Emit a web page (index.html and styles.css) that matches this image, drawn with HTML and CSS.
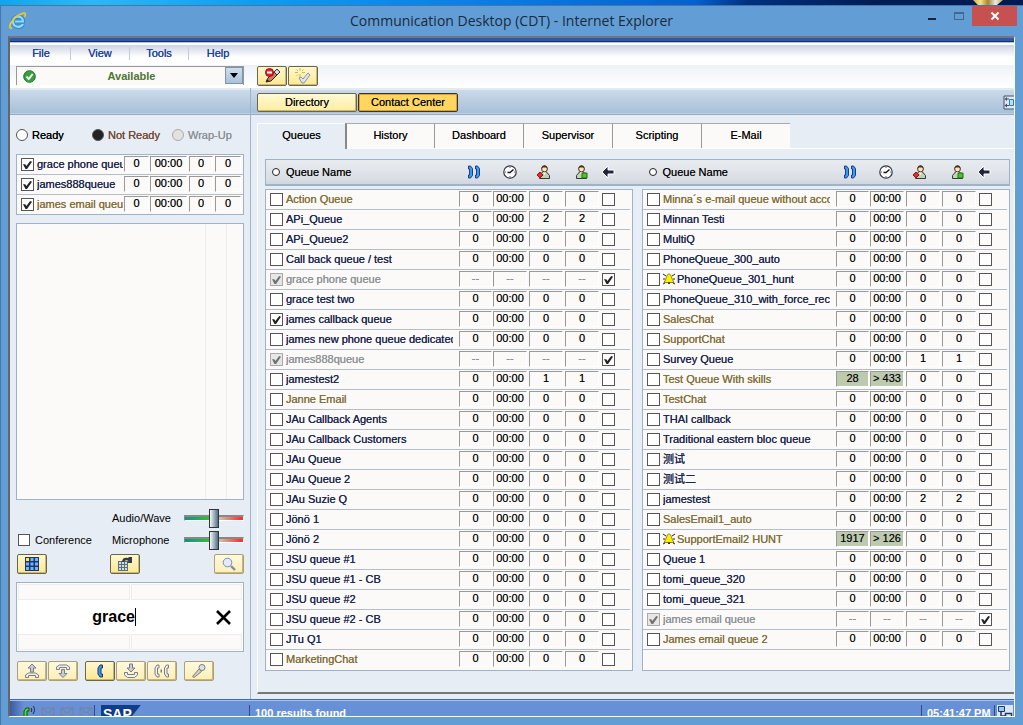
FILE: index.html
```html
<!doctype html>
<html lang="en">

<head>
    <meta charset="utf-8">
    <title>Communication Desktop (CDT)</title>
    <link rel="stylesheet" href="styles.css">
</head>

<body>
<!--Shared icon shapes-->
<svg class="sprite" aria-hidden="true">
    <symbol id="calls" viewBox="0 0 14 14">
        <path d="M1.500 1h2l2 2.500v7l-2 2.500h-2v-3h1v-6h-1zM8.500 1h2l2 2.500v7l-2 2.500h-2v-3h1v-6h-1z" fill="#2f9cff" stroke="#1b2c66" stroke-width=".9"/>
    </symbol>
    <symbol id="clock" viewBox="0 0 14 14">
        <circle cx="7" cy="7" r="6.200" fill="#fff" stroke="#334" stroke-width="1.200"/>
        <path d="M10.500 4.500L7 7.500H4.500" fill="none" stroke="#112" stroke-width="1.400"/>
        <path d="M7 2v1M7 11v1M2 7h1M11 7h1" stroke="#556"/>
    </symbol>
    <symbol id="person" viewBox="0 0 14 14">
        <path d="M2.500 13.500v-3l3-3.500h4l3 3.500v3z" fill="#c3d2b4" stroke="#333a35"/>
        <path d="M6 7l1.500 3L9 7" fill="#fff"/>
        <circle cx="7.500" cy="4" r="2.900" fill="#ffe2b8" stroke="#4a3520"/>
        <path d="M4.500 3.500c0-4.500 6-4.500 6 0L9 2.500H6z" fill="#4a3520"/>
    </symbol>
    <symbol id="arrow" viewBox="0 0 14 14">
        <path d="M1 7l6-6v4h6v4H7v4z" fill="#24243f" stroke="#fff"/>
    </symbol>
    <symbol id="bell" viewBox="0 0 12 12">
        <path d="M0 1l3 2M12 1L9 3M0 6h2M12 6h-2M0 11l2-1M12 11l-2-1" stroke="#222" fill="none"/>
        <path d="M6 1c-2.500 0-2 4-5 8.500h10C8 5 8.500 1 6 1z" fill="#fff000" stroke="#6d6200" stroke-width=".8"/>
        <path d="M5 9.500h2V11H5z" fill="#333"/>
    </symbol>
    <symbol id="mail" viewBox="0 0 14 12">
        <path d="M1 2h12v9H1zM1 2l6 5 6-5M1 11l5-5M13 11L8 6" fill="none" stroke="#77809a"/>
    </symbol>
</svg>

<div class="desktop"><span class="deskicon"></span></div>
<div class="window">
    <!--Title bar-->
    <header class="titlebar">
        <svg class="ie" viewBox="0 0 18 18">
            <path d="M14 12c-2 4-10 4-10-2.500C4 3 14 3 14 9.500H6" fill="none" stroke="#2f86c9" stroke-width="4"/>
            <path d="M14 12c-2 4-10 4-10-2.500C4 3 14 3 14 9.500H6" fill="none" stroke="#8fdcff" stroke-width="2.200"/>
            <path d="M3 16C-3 17 4 5 12 2c5-2 5 0 3.500 3" fill="none" stroke="#f6c81c" stroke-width="1.700"/>
        </svg>
        <h1>Communication Desktop (CDT) - Internet Explorer</h1>
        <div class="winbuttons">
            <button class="min" aria-label="Minimize"><span></span></button>
            <button class="max" aria-label="Maximize"><span></span></button>
            <button class="close" aria-label="Close"><svg width="10" height="10" viewBox="0 0 10 10"><path d="M1.500 1.500l7 7M8.500 1.500l-7 7" stroke="#fff" stroke-width="2"/></svg></button>
        </div>
    </header>

    <div class="frame">
        <div class="stripe"></div>
        <nav class="menu">
            <a href="#">File</a><a href="#">View</a><a href="#">Tools</a><a href="#">Help</a>
        </nav>
        <div class="toolbar">
            <div class="status">
                <svg class="ok" width="13" height="13" viewBox="0 0 13 13"><circle cx="6.500" cy="6.500" r="5.800" fill="#37a043" stroke="#256e2d"/><path d="M3.500 6.500l2.200 2.500 4-5" fill="none" stroke="#fff" stroke-width="1.800"/></svg>
                <select aria-label="Status"><option>Available</option></select>
                <span class="drop"></span>
            </div>
            <button class="btn" aria-label="Edit profile">
                <svg width="17" height="16" viewBox="0 0 17 16"><path d="M2 14l2-4 7-7 3 3-7 7z" fill="#c97f5b" stroke="#3a2018"/><path d="M10 4l3-3 3 3-3 3z" fill="#d8d8e4" stroke="#334"/><path d="M2 14l1-3 2 2z" fill="#222"/><circle cx="5.500" cy="4.500" r="4" fill="#e8202a" stroke="#8d1016"/><path d="M3 4.500h5" stroke="#fff" stroke-width="2"/></svg>
            </button>
            <button class="btn" aria-label="Apply">
                <svg width="17" height="16" viewBox="0 0 17 16"><path d="M5 0v3M5 6v3M0 4.500h3M7 4.500h3M1.500 1.500l1.500 1.500M8.500 1.500L7 3M1.500 8L3 6.500" stroke="#cdbd3b"/><path d="M4 10l2-1 2 2 5-6 2 2-6 8H7z" fill="#dde4ee" stroke="#8a93a3"/></svg>
            </button>
        </div>

        <div class="main">
            <aside class="left">
                <div class="band"></div>
                <div class="leftbody">
                    <div class="radios">
                        <label><input type="radio" name="state">Ready</label>
                        <label class="notready"><input type="radio" name="state" checked>Not Ready</label>
                        <label class="wrapup"><input type="radio" name="state" disabled>Wrap-Up</label>
                    </div>
                    <table class="queues mine" id="mine"></table>
                    <div class="calllist"></div>
                    <div class="audio">
                        <label for="wave">Audio/Wave</label>
                        <input type="range" id="wave">
                        <label class="conf"><input type="checkbox">Conference</label>
                        <label for="mic">Microphone</label>
                        <input type="range" id="mic">
                    </div>
                    <div class="buttons pads">
                        <button class="btn" aria-label="Keypad">
                            <svg width="14" height="14" viewBox="0 0 14 14"><path d="M0 0h14v14H0z" fill="#20336b"/><path d="M1 1h3v3H1z" fill="#ffe94a"/><path d="M5.500 1h3v3h-3zM10 1h3v3h-3zM1 5.500h3v3H1zM5.500 5.500h3v3h-3zM10 5.500h3v3h-3zM1 10h3v3H1zM5.500 10h3v3h-3zM10 10h3v3h-3z" fill="#6db7ff"/></svg>
                        </button>
                        <button class="btn" aria-label="Transfer keypad">
                            <svg width="14" height="14" viewBox="0 0 14 14"><path d="M0 4h10v10H0z" fill="#5d6f78"/><path d="M1 5h2v2H1zM4 5h2v2H4zM7 5h2v2H7zM1 8h2v2H1zM4 8h2v2H4zM7 8h2v2H7zM1 11h2v2H1zM4 11h2v2H4zM7 11h2v2H7z" fill="#cddde3"/><path d="M4 5c0-4 3-5 6-4l1-1h3v6H9l1.500-2C9 3 7 3 6 5z" fill="#343c48"/></svg>
                        </button>
                        <button class="btn dim" aria-label="Search">
                            <svg width="14" height="14" viewBox="0 0 14 14"><circle cx="5.500" cy="5.500" r="4.300" fill="#e2ebff" stroke="#7d8dab"/><path d="M9 9l4 4" stroke="#7d8dab" stroke-width="2.400"/></svg>
                        </button>
                    </div>
                    <div class="search">
                        <div class="slots"><span></span><span></span></div>
                        <div class="entry">
                            <input type="text" value="grace" aria-label="Number or name"><span class="caret"></span>
                            <button aria-label="Clear"><svg width="15" height="15" viewBox="0 0 15 15"><path d="M1 1l13 13M14 1L1 14" stroke="#000" stroke-width="2.600"/></svg></button>
                        </div>
                        <div class="slots"><span></span><span></span></div>
                    </div>
                    <div class="buttons">
                        <button class="btn dim" aria-label="Pick up"><svg width="16" height="16" viewBox="0 0 16 16"><path d="M8 1l4 4h-2.500v4h-3V5H4z" fill="#c9ccd6" stroke="#777d8b"/><path d="M1.500 14.500v-2.500l3-2h7l3 2v2.500h-3v-2h-7v2z" fill="#f3f1e8" stroke="#777d8b"/></svg></button>
                        <button class="btn dim" aria-label="Hang up"><svg width="16" height="16" viewBox="0 0 16 16"><path d="M8 14.500l-4-4h2.500v-4h3v4H12z" fill="#c9ccd6" stroke="#777d8b"/><path d="M1.500 6.500V4l3-2h7l3 2v2.500h-3v-2h-7v2z" fill="#f3f1e8" stroke="#777d8b"/></svg></button>
                        <button class="btn space" aria-label="Call"><svg width="16" height="16" viewBox="0 0 16 16"><path d="M10.500 2H8L6 5v6l2 3h2.500v-3H9V5h1.500z" fill="#3c9af5" stroke="#183568"/></svg></button>
                        <button class="btn dim" aria-label="Hold"><svg width="16" height="16" viewBox="0 0 16 16"><path d="M6.500 1h3v4H12L8 9 4 5h2.500z" fill="#c9ccd6" stroke="#777d8b"/><path d="M1.500 9.500h3v2h7v-2h3V12l-3 2.500h-7l-3-2.500z" fill="#f3f1e8" stroke="#777d8b"/></svg></button>
                        <button class="btn dim" aria-label="Conference call"><svg width="16" height="16" viewBox="0 0 16 16"><path d="M5 2H3L1 5v6l2 3h2v-3H3.500V5H5zM14.500 2h-2l-2 3v6l2 3h2v-3H13V5h1.500z" fill="#f3f1e8" stroke="#777d8b"/><path d="M6.500 6.500h1.500v3H6.500z" fill="#777d8b"/></svg></button>
                        <button class="btn dim space" aria-label="Record"><svg width="16" height="16" viewBox="0 0 16 16"><path d="M3 14.500l-1.500-1L8 6l2.500 2.500z" fill="#d8d2b4" stroke="#777d8b"/><circle cx="11" cy="4.500" r="3" fill="#dfe2ea" stroke="#777d8b"/></svg></button>
                    </div>
                </div>
            </aside>

            <section class="right">
                <div class="band">
                    <button class="tabbtn">Directory</button>
                    <button class="tabbtn on">Contact Center</button>
                    <button class="dock" aria-label="Dock"><svg width="11" height="15" viewBox="0 0 11 15"><path d="M11 1H1v13h10" fill="#dfe8f2" stroke="#40506e"/><path d="M1.500 4l2.500-2v4zM1.500 10.500l2.500-2v4z" fill="#40506e"/><path d="M3 4h3M3 10.500h3" stroke="#40506e"/><path d="M6.500 4.500h4v6h-4z" fill="#b6e4f7" stroke="#2d7fa8"/></svg></button>
                </div>
                <div class="tabs">
                    <button class="current">Queues</button>
                    <button>History</button>
                    <button>Dashboard</button>
                    <button>Supervisor</button>
                    <button>Scripting</button>
                    <button>E-Mail</button>
                </div>
                <div class="panel">
                    <div class="heads" id="heads"></div>
                    <div class="lists">
                        <div class="list"><table class="queues" id="listA"></table></div>
                        <div class="list"><table class="queues" id="listB"></table></div>
                    </div>
                </div>
            </section>
        </div>

        <!--Status bar-->
        <footer class="statusbar">
            <div class="tray">
                <svg width="14" height="14" viewBox="0 0 14 14"><path d="M7 2H4L2 5v6l2 3h1V5h2z" fill="#55dd22" stroke="#134d13"/><path d="M9 2c1 1 1 3 0 4M11 0c2 2 2 5 0 8" stroke="#223" fill="none"/></svg>
                <svg width="14" height="12"><use href="#mail"/></svg>
                <svg width="14" height="12"><use href="#mail"/></svg>
                <svg width="14" height="12"><use href="#mail"/></svg>
            </div>
            <div class="brand"><span>SAP</span></div>
            <div class="found">100 results found</div>
            <div class="time">05:41:47 PM</div>
            <div class="net"><svg width="16" height="14" viewBox="0 0 16 14"><path d="M0 0h16v14H0z" fill="#dce6f5"/><path d="M1.500 1.500h6v5h-6z" fill="#8fd0ee" stroke="#22365e"/><path d="M8.500 8.500h6v5h-6zM4 7v4h4" fill="none" stroke="#22365e" stroke-width="1.500"/></svg></div>
        </footer>
    </div>
</div>
<script src="script.js"></script>
</body>

</html>
```
FILE: styles.css
```css
*{box-sizing:border-box;}
body{margin:0; height:100vh; overflow:hidden; display:flex; flex-direction:column; font:11px/14px "Liberation Sans", "Noto Sans CJK SC", sans-serif; color:#000; background:#629ed5;}
button,input,select{font:inherit; color:inherit; margin:0;}
button{padding:0;}
svg{display:block; flex:none;}
.sprite{position:absolute; width:0; height:0;}
/*Desktop strip and window frame*/
.desktop{height:5px; flex:none; display:flex; justify-content:flex-end; padding-right:20px; background:linear-gradient(100deg,#10a5ec 0,#2cb8f5 9%,#0d9df0 25%,#0a80e8 45%,#0560d0 68%,#02307f 73%,#001d56 85%,#001a50);}
.deskicon{width:30px; height:5px; background:linear-gradient(90deg,#d9b43a,#f5e08a,#a9852a,#e8e8e8,#c9a63a); clip-path:polygon(0 0,100% 0,80% 100%,16% 100%);}
.window{flex:1; min-height:0; display:flex; flex-direction:column; padding:0 8px 8px 7px; border-top:1px solid #4577a8; border-left:1px solid #4577a8; background:#629ed5;}
.titlebar{height:30px; flex:none; position:relative; display:flex; align-items:center;}
.ie{width:18px; height:18px; margin-left:1px;}
.titlebar h1{flex:1; margin:0; padding-right:19px; text-align:center; font:14px/20px "Open Sans", sans-serif; color:#1b2a3a;}
.winbuttons{position:absolute; right:-2px; top:0; display:flex;}
.winbuttons button{width:27px; height:20px; border:0; background:none; display:flex; align-items:center; justify-content:center;}
.min span{width:8px; height:2px; margin-top:6px; background:#1d2630;}
.max span{width:10px; height:8px; border:1px solid #44688c; border-top-width:2px;}
.winbuttons .close{width:45px; background:#c75050;}
.frame{flex:1; min-height:0; display:flex; flex-direction:column; border:solid; border-width:2px 1px 1px 2px; border-color:#6f7782 #fff #fff #666; background:#e6edf4;}
.stripe{height:7px; flex:none; background:linear-gradient(#2f58a6 0 3px,#152f72 3px 4px,#b9c3d6 4px 5px,#fff 5px);}
/*Menu and toolbar*/
.menu{height:20px; flex:none; display:flex; align-items:flex-start; padding:2px 0 0 1px; background:linear-gradient(#cdd3e2,#fff 12px);}
.menu a{width:59px; line-height:13px; text-align:center; color:#1d439b; text-decoration:none; border-left:1px solid #c3cad8; text-shadow:0 0 0 currentColor;}
.menu a:first-child{border-color:transparent;}
.toolbar{height:23px; flex:none; display:flex; align-items:flex-start; padding:1px 6px; gap:1px; background:linear-gradient(#eef2f8,#fff);}
.status{position:relative; width:228px; margin-right:12px;}
.status select{display:block; appearance:none; width:100%; height:19px; padding:0 18px 0 21px; border:1px solid #999; border-bottom:0; border-radius:0; background:#fbfaf8; font-weight:bold; color:#4d7431; text-align:center; text-align-last:center;}
.ok{position:absolute; left:7px; top:4px;}
.drop{position:absolute; right:1px; top:1px; width:18px; height:17px; border:1px solid #7f92ac; background:linear-gradient(#cfdeee,#a9c1da); pointer-events:none;}
.drop::after{content:""; position:absolute; left:4px; top:5px; border:4px solid transparent; border-top:5px solid #000; border-bottom:0;}
.btn{width:30px; height:20px; flex:none; display:flex; align-items:center; justify-content:center; border:1px solid #6d6548; border-radius:2px; background:linear-gradient(#fff8d0,#fde991); box-shadow:inset -1px -1px #c9b672;}
.dim{border-color:#aaa07c; background:linear-gradient(#fff9de,#fcefb6);}
.main{flex:1; min-height:0; display:flex;}
.left{width:241px; flex:none; display:flex; flex-direction:column; border-right:1px solid #9fb3c8;}
.band{height:27px; flex:none; display:flex; align-items:center; gap:1px; border-top:2px solid #e2eaf2; border-bottom:1px solid #93aac2; background:linear-gradient(#cadaea,#a6bfd8); box-shadow:inset 0 -1px #c0d0e0;}
/*Left side*/
.leftbody{flex:1; min-height:0; display:flex; flex-direction:column; padding:13px 6px 18px;}
.radios{display:grid; grid-template-columns:76px 80px auto; margin-bottom:12px; text-shadow:0 0 0 currentColor;}
.radios label{display:flex; align-items:center; gap:4px;}
.radios input{appearance:none; width:12px; height:12px; border:1px solid #555; border-radius:50%; background:#fff;}
.radios input:checked{background:#222;}
.notready{color:#74483a;}
.wrapup{color:#8d9296;}
.radios input:disabled{border-color:#aaa; background:#e2e2e2;}
input[type=checkbox]{appearance:none; display:block; position:relative; width:13px; height:13px; border:1px solid #555; background:#fff;}
input[type=checkbox]:checked::before{content:""; position:absolute; left:1px; top:2px; width:9px; height:8px; background:#222; clip-path:polygon(0 40%,25% 40%,38% 62%,80% 0,100% 10%,45% 100%,28% 100%);}
input[type=checkbox]:disabled{border-color:#aaa; background:#e6e6e6;}
input[type=checkbox]:disabled::before{opacity:.6;}
.calllist{flex:1; min-height:0; margin:8px 0; border:1px solid #9fb3c8; background:linear-gradient(90deg,#fbfaf8 0 188px,#eeedec 188px 189px,#fbfaf8 189px 209px,#eeedec 209px 210px,#fbfaf8 210px);}
.audio{display:grid; grid-template-columns:96px 72px 60px; row-gap:3px; align-items:center;}
.audio > label[for=wave]{grid-column:2;}
.conf{display:flex; align-items:center; gap:5px; padding-left:2px;}
.conf input[type=checkbox]{width:12px; height:12px;}
input[type=range]{appearance:none; display:block; width:60px; height:19px; background:none;}
input[type=range]::-webkit-slider-runnable-track{height:6px; border:1px solid; border-color:#888 #fff #fff #888; border-top-width:2px; background:linear-gradient(90deg,#11908a,#2bc233 40%,#c8c2ae 60%,#f33 95%);}
input[type=range]::-webkit-slider-thumb{appearance:none; width:10px; height:19px; margin-top:-8px; border:1px solid #333; background:linear-gradient(90deg,#f5f8fa,#4f6f87);}
.buttons{display:flex; gap:1px; padding-left:1px;}
.buttons .space{margin-left:6px;}
.pads{gap:63px; margin:5px 0 8px;}
.pads .dim{margin-left:auto;}
.search{height:70px; flex:none; display:flex; flex-direction:column; margin-bottom:9px; padding:1px; border:1px solid #9fb3c8; background:#fdfdfc;}
.slots{height:16px; display:flex; gap:1px;}
.slots span{flex:1; border:1px solid #eeedec; background:#fbfaf8;}
.entry{flex:1; display:flex; align-items:center; background:#fff;}
.entry input{width:117px; padding:0; border:0; background:none; font-size:16px; font-weight:bold; text-align:right; outline:0;}
.caret{width:1px; height:18px; background:#000;}
.entry button{margin-left:auto; margin-right:11px; border:0; background:none;}
/*Queue tables*/
.queues{width:100%; border-collapse:separate; border-spacing:0; table-layout:fixed; background:#fbfaf8;}
.queues td{height:20px; padding:0; border-bottom:1px solid #b3bec8;}
.queues .pick{width:20px; padding-left:4px;}
.queues .name{padding-right:6px; padding-bottom:2px;}
.name div{display:flex; align-items:center; gap:2px; overflow:hidden; height:14px; white-space:nowrap; color:#1c2850; text-shadow:0 0 0 currentColor;}
.mailq .name div{color:#84703a;}
.off .name div,.off .num{color:#8d9296;}
.queues .num{width:36px; padding:1px 2px 0 0; text-align:center; vertical-align:top;}
.queues .num.first{width:34px; padding-right:1px;}
.num div{height:16px; line-height:13px; border:1px solid; border-color:#999 #fff #fff #999; text-shadow:0 0 0 #777;}
.hot div{background:#bccaae;}
.queues .take{width:29px; padding-left:1px;}
.mine{border:1px solid #9fb3c8;}
.mine tr:last-child td{border-bottom:0; height:19px;}
.queues.mine .name{padding-right:1px;}
.queues.mine .num{width:26px;}
.queues.mine .num.wait{width:39px;}
.queues.mine .num:last-child{width:28px;}
/*Right side*/
.right{flex:1; min-width:0; display:flex; flex-direction:column;}
.right .band{padding-left:6px;}
.tabbtn{width:100px; height:19px; border:1px solid #6d6548; border-radius:2px; background:linear-gradient(#fff9d5,#feeda0); box-shadow:inset -1px -1px #c9b672; text-shadow:0 0 0 #555;}
.tabbtn.on{background:#ffd65e; border-color:#3b3524; box-shadow:inset 0 0 0 1px #d9a03a;}
.dock{margin-left:auto; border:0; background:none;}
.tabs{display:flex; flex:none; margin:8px 0 0 6px; position:relative;}
.tabs button{width:89px; height:25px; padding-bottom:3px; border:0; border-top:1px solid #aaa; border-left:1px solid #999; background:#fbfaf8; text-shadow:0 0 0 #555;}
.tabs .current{width:88px; border-top-color:#fff; border-left-color:#fff; background:#e6edf4;}
.tabs .current + button{border-left:2px solid #888; height:26px; padding-bottom:4px;}
.panel{flex:1; min-height:0; display:flex; flex-direction:column; margin:-1px 0 5px 6px; padding:11px 4px 21px 7px; border-left:1px solid #fff; border-bottom:2px solid #777; background:linear-gradient(90deg,transparent 88px,#fff 88px) 0 0/100% 1px no-repeat;}
.heads{display:flex; height:27px; flex:none; gap:11px; padding-right:1px; border:1px solid #9fb3c8; border-bottom-width:2px; background:linear-gradient(#e9ecef,#dadee5 80%,#cfd5de);}
.head{flex:1; display:grid; grid-template-columns:20px 1fr 36px 34px 37px 27px 33px; align-items:center; text-shadow:0 0 0 #555;}
.head svg{width:14px; height:14px; margin-left:2px; overflow:visible;}
.head i{width:8px; height:8px; margin-left:6px; border:1px solid #222; border-radius:50%; background:#fff;}
.lists{flex:1; min-height:0; display:flex; gap:9px; margin-top:3px;}
.list{flex:1; min-width:0; padding-right:2px; border:1px solid #9fb3c8; background:#fbfaf8;}
#listA tr:last-child td{border-bottom-color:transparent;}
/*Status bar*/
.statusbar{height:17px; flex:none; overflow:hidden; display:flex; align-items:flex-start; padding-right:1px; border-top:1px solid #3f67b4; box-shadow:inset 0 1px #a9c2f0; background:linear-gradient(90deg,#3d5aa0,#6890d6 14px); color:#fff; font-weight:bold;}
.statusbar > div{height:22px; margin-top:5px; border-left:1px solid #2c4a8c; padding-left:5px; display:flex; align-items:flex-start;}
.statusbar .tray{border:0; width:84px; padding-left:12px; padding-top:1px; gap:5px;}
.statusbar .brand{width:155px;}
.brand span{padding:0 9px 0 2px; height:20px; background:#103c8c; clip-path:polygon(0 0,100% 0,60% 100%,0 100%); font-size:14px; line-height:18px; margin-left:1px;}
.found{flex:1; line-height:16px;}
.time{width:73px; line-height:16px;}
.statusbar .net{padding-left:2px;}
```
FILE: script.js
```js
//name, calls, wait, signed out, signed in, type (m = mail/chat, x = own queue, c = checked, h = hunt)
const mine = [
    ["grace phone queue", "0", "00:00", "0", "0", "c"],
    ["james888queue", "0", "00:00", "0", "0", "c"],
    ["james email queue", "0", "00:00", "0", "0", "cm"]
];
const listA = [
    ["Action Queue", "0", "00:00", "0", "0", "m"],
    ["APi_Queue", "0", "00:00", "2", "2", ""],
    ["APi_Queue2", "0", "00:00", "0", "0", ""],
    ["Call back queue / test", "0", "00:00", "0", "0", ""],
    ["grace phone queue", "--", "--", "--", "--", "x"],
    ["grace test two", "0", "00:00", "0", "0", ""],
    ["james callback queue", "0", "00:00", "0", "0", "c"],
    ["james new phone queue dedicated", "0", "00:00", "0", "0", ""],
    ["james888queue", "--", "--", "--", "--", "x"],
    ["jamestest2", "0", "00:00", "1", "1", ""],
    ["Janne Email", "0", "00:00", "0", "0", "m"],
    ["JAu Callback Agents", "0", "00:00", "0", "0", ""],
    ["JAu Callback Customers", "0", "00:00", "0", "0", ""],
    ["JAu Queue", "0", "00:00", "0", "0", ""],
    ["JAu Queue 2", "0", "00:00", "0", "0", ""],
    ["JAu Suzie Q", "0", "00:00", "0", "0", ""],
    ["Jönö 1", "0", "00:00", "0", "0", ""],
    ["Jönö 2", "0", "00:00", "0", "0", ""],
    ["JSU queue #1", "0", "00:00", "0", "0", ""],
    ["JSU queue #1 - CB", "0", "00:00", "0", "0", ""],
    ["JSU queue #2", "0", "00:00", "0", "0", ""],
    ["JSU queue #2 - CB", "0", "00:00", "0", "0", ""],
    ["JTu Q1", "0", "00:00", "0", "0", ""],
    ["MarketingChat", "0", "00:00", "0", "0", "m"]
];
const listB = [
    ["Minna´s e-mail queue without acco", "0", "00:00", "0", "0", "m"],
    ["Minnan Testi", "0", "00:00", "0", "0", ""],
    ["MultiQ", "0", "00:00", "0", "0", ""],
    ["PhoneQueue_300_auto", "0", "00:00", "0", "0", ""],
    ["PhoneQueue_301_hunt", "0", "00:00", "0", "0", "h"],
    ["PhoneQueue_310_with_force_rec", "0", "00:00", "0", "0", ""],
    ["SalesChat", "0", "00:00", "0", "0", "m"],
    ["SupportChat", "0", "00:00", "0", "0", "m"],
    ["Survey Queue", "0", "00:00", "1", "1", ""],
    ["Test Queue With skills", "28", "> 433", "0", "0", "m"],
    ["TestChat", "0", "00:00", "0", "0", "m"],
    ["THAI callback", "0", "00:00", "0", "0", ""],
    ["Traditional eastern bloc queue", "0", "00:00", "0", "0", ""],
    ["测试", "0", "00:00", "0", "0", ""],
    ["测试二", "0", "00:00", "0", "0", ""],
    ["jamestest", "0", "00:00", "2", "2", ""],
    ["SalesEmail1_auto", "0", "00:00", "0", "0", "m"],
    ["SupportEmail2 HUNT", "1917", "> 126", "0", "0", "mh"],
    ["Queue 1", "0", "00:00", "0", "0", ""],
    ["tomi_queue_320", "0", "00:00", "0", "0", ""],
    ["tomi_queue_321", "0", "00:00", "0", "0", ""],
    ["james email queue", "--", "--", "--", "--", "x"],
    ["James email queue 2", "0", "00:00", "0", "0", "m"]
];

//Builds the rows of one queue table
const fill = (id, rows, take) => {
    let html = "";
    for (const [name, calls, wait, out, on, type] of rows) {
        const own = type.includes("x");
        const hot = wait[0] == ">" ? " hot" : "";
        const state = own ? "checked disabled" : type.includes("c") ? "checked" : "";
        html += `<tr class="${own ? "off" : type.includes("m") ? "mailq" : ""}">
            <td class="pick"><input type="checkbox" aria-label="${name}" ${state}></td>
            <td class="name"><div>${type.includes("h") ? '<svg width="12" height="12"><use href="#bell"/></svg>' : ""}<span>${name}</span></div></td>
            <td class="num first${hot}"><div>${calls}</div></td>
            <td class="num wait${hot}"><div>${wait}</div></td>
            <td class="num"><div>${out}</div></td>
            <td class="num"><div>${on}</div></td>`;
        if (take)
            html += `<td class="take"><input type="checkbox" aria-label="Serve ${name}" ${own ? "checked" : ""}></td>`;
        html += `</tr>`;
    }
    document.querySelector(id).innerHTML = html;
};

const head = `<div class="head"><i></i><span>Queue Name</span>
    <svg><use href="#calls"/></svg>
    <svg><use href="#clock"/></svg>
    <svg viewBox="0 0 14 14"><use href="#person"/><path d="M3 7l3 3-3 3-3-3z" fill="#e03030" stroke="#8d1010"/></svg>
    <svg viewBox="0 0 14 14"><use href="#person"/><path d="M8 8h5v5H8z" fill="#4fc52a" stroke="#1d6a12"/></svg>
    <svg><use href="#arrow"/></svg></div>`;

document.querySelector("#heads").innerHTML = head + head;
fill("#mine", mine, false);
fill("#listA", listA, true);
fill("#listB", listB, true);
```
